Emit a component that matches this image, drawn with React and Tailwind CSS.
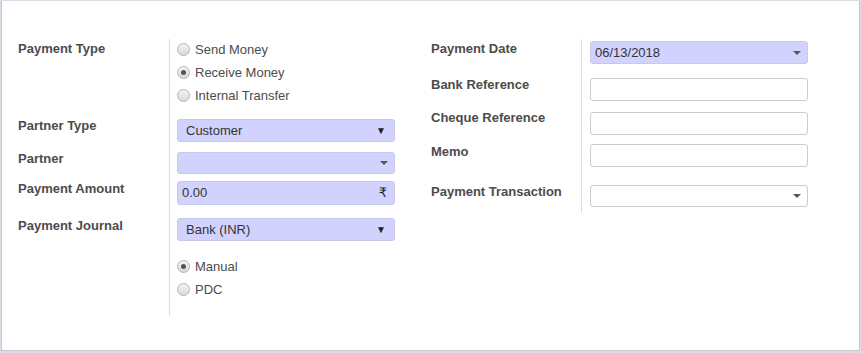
const font = { fontFamily: '"Liberation Sans", Arial, sans-serif' };

const Radio = ({ label, checked }) => (
  <div className="flex items-center h-[23px]">
    <span className="relative w-[13px] h-[13px] rounded-full border border-[#b4b4b4] bg-[linear-gradient(#f4f4f4,#d9d9d9)] flex items-center justify-center">
      {checked && <span className="w-[5px] h-[5px] rounded-full bg-[#555]" />}
    </span>
    <span className="ml-[5px] text-[13px] text-[#4c4c4c]">{label}</span>
  </div>
);

const Caret = () => (
  <span className="w-0 h-0 border-l-[4px] border-r-[4px] border-t-[4px] border-l-transparent border-r-transparent border-t-[#555]" />
);

const Field = ({ value, filled = true, arrow, h = 'h-[23px]', pad = 'pl-[4px]' }) => (
  <div
    className={`w-[218px] ${h} rounded-[3px] border flex items-center justify-between ${pad} pr-[6px] text-[13px] text-[#333] ${
      filled ? 'bg-[#d2d2ff] border-[#c8c8e8]' : 'bg-white border-[#ccc]'
    }`}
  >
    <span>{value}</span>
    {arrow === 'solid' && <span className="text-[10px] text-[#222] mr-[2px]">▼</span>}
    {arrow === 'caret' && <Caret />}
    {arrow === 'rupee' && (
      <span className="text-[13px] text-[#222] mr-[1px]" style={{ fontFamily: '"DejaVu Sans", "Noto Sans", sans-serif' }}>₹</span>
    )}
  </div>
);

const Row = ({ label, h, lp, fp, children, left = true }) => (
  <div className="flex" style={{ height: h }}>
    <div className={`${left ? 'w-[151px]' : 'w-[150px]'} shrink-0 text-[13px] font-bold text-[#4c4c4c]`} style={{ paddingTop: lp }}>
      {label}
    </div>
    <div className={`border-l border-[#ddd] ${left ? 'pl-[7px]' : 'pl-[8px]'}`} style={{ paddingTop: fp }}>
      {children}
    </div>
  </div>
);

export default function App() {
  return (
    <div className="w-[861px] h-[353px] bg-[#dedbe6] pt-[1px] px-[1px] pb-[2px]" style={font}>
      <div className="h-full bg-white border-x border-b border-[#c6c6ce] flex pt-[38px] pl-[16px]">
        <div className="flex flex-col">
          <Row label="Payment Type" h={76} lp={0} fp={0}>
            <div className="-mt-[1px]">
              <Radio label="Send Money" />
              <Radio label="Receive Money" checked />
              <Radio label="Internal Transfer" />
            </div>
          </Row>
          <Row label="Partner Type" h={32} lp={1} fp={4}>
            <Field value="Customer" arrow="solid" pad="pl-[8px]" />
          </Row>
          <Row label="Partner" h={30} lp={2} fp={5}>
            <Field value="" arrow="caret" h="h-[22px]" />
          </Row>
          <Row label="Payment Amount" h={36} lp={2} fp={4}>
            <Field value="0.00" arrow="rupee" h="h-[24px]" />
          </Row>
          <Row label="Payment Journal" h={36} lp={3} fp={5}>
            <Field value="Bank (INR)" arrow="solid" pad="pl-[8px]" />
          </Row>
          <Row label="" h={67} lp={0} fp={6}>
            <Radio label="Manual" checked />
            <Radio label="PDC" />
          </Row>
        </div>
        <div className="flex flex-col ml-[36px]">
          <Row left={false} label="Payment Date" h={34} lp={0} fp={2}>
            <Field value="06/13/2018" arrow="caret" />
          </Row>
          <Row left={false} label="Bank Reference" h={34} lp={2} fp={5}>
            <Field filled={false} />
          </Row>
          <Row left={false} label="Cheque Reference" h={33} lp={1} fp={5}>
            <Field filled={false} />
          </Row>
          <Row left={false} label="Memo" h={37} lp={2} fp={4}>
            <Field filled={false} />
          </Row>
          <Row left={false} label="Payment Transaction" h={36} lp={5} fp={8}>
            <Field filled={false} arrow="caret" h="h-[22px]" />
          </Row>
        </div>
      </div>
    </div>
  );
}
